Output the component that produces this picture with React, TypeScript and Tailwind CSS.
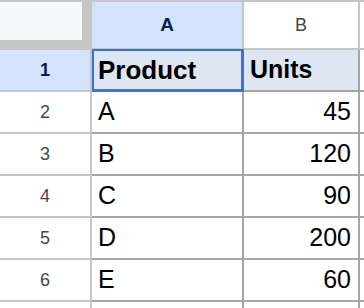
import React from "react";

const rows: [string, string, string][] = [
  ["2", "A", "45"],
  ["3", "B", "120"],
  ["4", "C", "90"],
  ["5", "D", "200"],
  ["6", "E", "60"],
  ["", "", ""],
];

export default function App() {
  return (
    <div
      className="relative w-[364px] h-[308px] overflow-hidden bg-white"
      style={{ fontFamily: '"Liberation Sans", Arial, sans-serif' }}
    >
      {/* header row */}
      <div className="flex h-[50px]">
        <div className="w-[92px] h-[50px] bg-[#c4c7c5] pt-[2px] shrink-0">
          <div className="w-[82px] h-[38px] bg-[#f8f9fa]" />
        </div>
        <div className="w-[152px] shrink-0 border-t-2 border-b-2 border-r-2 border-[#c4c7c5] bg-[#d3e3fd] flex items-center justify-center text-[19px] font-bold text-[#041e49]">
          A
        </div>
        <div className="w-[116px] shrink-0 border-t-2 border-b-2 border-r-2 border-[#c4c7c5] bg-white flex items-center justify-center text-[18px] text-[#444746]">
          B
        </div>
        <div className="flex-1 border-t-2 border-b-2 border-[#c4c7c5] bg-white" />
      </div>

      {/* row 1 */}
      <div className="flex h-[42px]">
        <div className="w-[92px] shrink-0 border-r-2 border-b-2 border-[#c4c7c5] bg-[#d3e3fd] flex items-center justify-center text-[18px] font-bold text-[#041e49]">
          1
        </div>
        <div className="w-[152px] shrink-0 border-r-2 border-b-2 border-[#a6a6a6] bg-[#dde6f1] flex items-center pl-[6px] text-[26px] font-bold text-black">
          Product
        </div>
        <div className="w-[116px] shrink-0 border-r-2 border-b-2 border-[#a6a6a6] bg-[#dde6f1] flex items-center pl-[6px] text-[25px] font-bold text-black">
          Units
        </div>
        <div className="flex-1 border-b-2 border-[#a6a6a6] bg-white" />
      </div>

      {rows.map(([n, a, b], i) => (
        <div key={i} className="flex h-[42px]">
          <div className="w-[92px] shrink-0 border-r-2 border-b-2 border-[#c4c7c5] bg-white flex items-center justify-center text-[18px] text-[#444746]">
            {n}
          </div>
          <div className="w-[152px] shrink-0 border-r-2 border-b-2 border-[#a6a6a6] bg-white flex items-center pl-[6px] text-[25px] text-black">
            {a}
          </div>
          <div className="w-[116px] shrink-0 border-r-2 border-b-2 border-[#a6a6a6] bg-white flex items-center justify-end pr-[7px] text-[25px] text-black">
            {b}
          </div>
          <div className="flex-1 border-b-2 border-[#a6a6a6] bg-white" />
        </div>
      ))}

      {/* selection */}
      <div className="absolute left-[92px] top-[49px] w-[152px] h-[43px] border-t-2 border-l-2 border-r-[3px] border-b-[3px] border-[#3574e4] pointer-events-none" />
    </div>
  );
}
